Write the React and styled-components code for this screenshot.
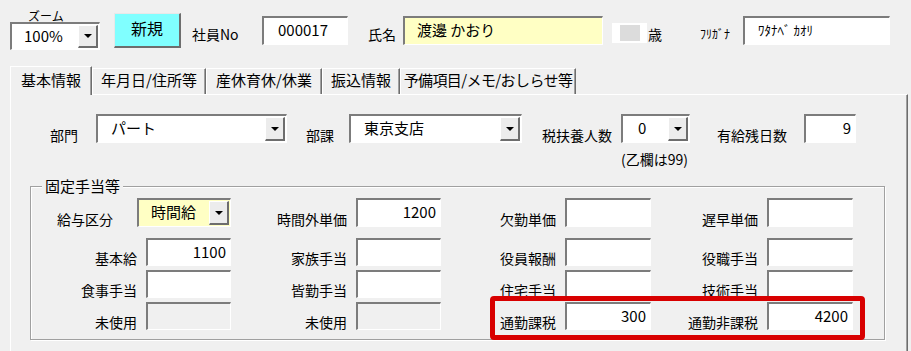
import React from "react";
import styled, { createGlobalStyle } from "styled-components";

const GlobalStyle = createGlobalStyle`
  body {
    margin: 0;
    background: #f0f0f0;
    font-family: "Noto Sans CJK JP", "Noto Sans", sans-serif;
    color: #000;
  }
`;

const Page = styled.div`
  width: 911px;
  height: 351px;
  overflow: hidden;
  background: #f0f0f0;
`;

const TopBar = styled.div`
  display: flex;
  align-items: center;
  height: 40px;
  padding: 10px 0 0 10px;
`;

const ZoomBlock = styled.div`
  display: flex;
  flex-direction: column;
  width: 90px;
`;

const ZoomLabel = styled.div`
  font-size: 12px;
  line-height: 12px;
  padding-left: 18px;
`;

const TopLabel = styled.div`
  box-sizing: border-box;
  width: ${(p) => p.$w}px;
  margin-left: ${(p) => p.$ml || 0}px;
  padding-top: 8px;
  font-size: ${(p) => p.$fs || 14}px;
  line-height: 16px;
  white-space: nowrap;
`;

const NewButton = styled.button`
  box-sizing: border-box;
  width: 67px;
  height: 35px;
  margin-left: 14px;
  background: #80ffff;
  border-style: solid;
  border-width: 1px 2px 2px 1px;
  border-color: #e8e8e8 #6d6d6d #6d6d6d #e8e8e8;
  font-family: inherit;
  font-size: 16px;
  padding: 0 0 3px;
  color: #000;
`;

const TextBox = styled.div`
  box-sizing: border-box;
  width: ${(p) => (p.$w ? `${p.$w}px` : "100%")};
  height: ${(p) => p.$h || 28}px;
  border-style: solid;
  border-width: 2px 1px 1px 2px;
  border-color: #7c7c7c #fff #fff #7c7c7c;
  background: ${(p) => (p.$off ? "#f0f0f0" : p.$bg || "#fff")};
  font-size: ${(p) => p.$fs || 15}px;
  line-height: 20px;
  padding: 2px ${(p) => (p.$right ? 4 : 0)}px 0 ${(p) => (p.$right ? 0 : p.$pl ?? 12)}px;
  text-align: ${(p) => (p.$right ? "right" : "left")};
  white-space: nowrap;
  margin-left: ${(p) => p.$ml || 0}px;
`;

const AgeBox = styled.div`
  box-sizing: border-box;
  width: 35px;
  height: 20px;
  margin: 6px 1px 0 9px;
  background: #dcdcdc;
  border-style: solid;
  border-color: #fff;
  border-width: 2px 7px 2px 8px;
`;

const Combo = styled.div`
  box-sizing: border-box;
  display: flex;
  width: ${(p) => p.$w}px;
  height: ${(p) => p.$h || 29}px;
  border-style: solid;
  border-width: 2px 1px 1px 2px;
  border-color: #7c7c7c #fff #fff #7c7c7c;
  background: ${(p) => p.$bg || "#fff"};
  font-size: 15px;
  line-height: 20px;
`;

const ComboText = styled.div`
  flex: 1;
  padding: 2px 0 0 ${(p) => p.$pl || 12}px;
  white-space: nowrap;
`;

const DropButton = styled.div`
  box-sizing: border-box;
  width: 20px;
  margin: 1px 1px 1px 0;
  background: #ececec;
  border-style: solid;
  border-width: 1px 2px 2px 1px;
  border-color: #fff #6d6d6d #6d6d6d #fff;
  display: flex;
  align-items: center;
  justify-content: center;

  &::after {
    content: "";
    border-left: 4px solid transparent;
    border-right: 4px solid transparent;
    border-top: 4px solid #000;
  }
`;

const TabBar = styled.div`
  display: flex;
  align-items: flex-end;
  height: 28px;
  margin-top: 16px;
  padding-left: 10px;
`;

const Tab = styled.div`
  box-sizing: border-box;
  position: relative;
  z-index: ${(p) => (p.$active ? 2 : 1)};
  width: ${(p) => p.$w}px;
  height: ${(p) => (p.$active ? 29 : 26)}px;
  margin-bottom: ${(p) => (p.$active ? -1 : 0)}px;
  padding-top: ${(p) => (p.$active ? 3 : 1)}px;
  background: #f0f0f0;
  border-style: solid;
  border-width: 1px 1px 0 1px;
  border-color: #fff #6d6d6d #fff #fff;
  box-shadow: inset -1px 0 #a0a0a0;
  font-size: 15px;
  line-height: 20px;
  text-align: center;
  white-space: nowrap;
  letter-spacing: ${(p) => p.$ls || 0}px;
`;

const Panel = styled.div`
  box-sizing: border-box;
  width: 898px;
  height: 270px;
  margin-left: 10px;
  border-top: 1px solid #fff;
  border-left: 1px solid #fff;
  border-right: 1px solid #6d6d6d;
  box-shadow: inset -1px 0 #a0a0a0;
  padding-top: 19px;
`;

const HeadRow = styled.div`
  display: flex;
  align-items: flex-start;
  padding-left: 39px;
`;

const HeadLabel = styled.div`
  box-sizing: border-box;
  width: ${(p) => p.$w}px;
  margin-left: ${(p) => p.$ml || 0}px;
  height: 29px;
  display: flex;
  align-items: flex-end;
  font-size: 14px;
  line-height: 16px;
  white-space: nowrap;
`;

const Stack = styled.div`
  display: flex;
  flex-direction: column;
`;

const Note = styled.div`
  margin-top: 7px;
  font-size: 14px;
  line-height: 18px;
  white-space: nowrap;
`;

const Group = styled.fieldset`
  box-sizing: border-box;
  width: 855px;
  margin: 8px 0 0 19px;
  padding: 2px 9px 9px 9px;
  border: 1px solid #a0a0a0;
  box-shadow: inset 1px 1px 0 #fff, 1px 1px 0 #fff;
  min-inline-size: auto;
`;

const Legend = styled.legend`
  margin-left: 2px;
  padding: 0 3px;
  font-size: 15px;
  line-height: 20px;
  background: #f0f0f0;
`;

const Rows = styled.div`
  display: flex;
  flex-direction: column;
  gap: 4px;
`;

const GridRow = styled.div`
  position: relative;
  display: grid;
  grid-template-columns: 106px 85px 125px 85px 124px 86px 116px 86px;
  height: ${(p) => p.$h || 28}px;
  margin-bottom: ${(p) => p.$mb || 0}px;
`;

const CellLabel = styled.div`
  align-self: end;
  text-align: right;
  padding-right: 9px;
  font-size: 14px;
  line-height: 16px;
  white-space: nowrap;
`;

const PayCell = styled.div`
  grid-column: span 2;
  display: flex;
  align-items: flex-end;
  gap: 15px;
  padding-left: 17px;
`;

const Highlight = styled.div`
  position: absolute;
  left: 450px;
  top: -6px;
  width: 375px;
  height: 44px;
  box-sizing: border-box;
  border: 5px solid #d80000;
  border-radius: 4px;
  z-index: 3;
  pointer-events: none;
`;

const rows = [
  [
    ["基本給", "1100"],
    ["家族手当", ""],
    ["役員報酬", ""],
    ["役職手当", ""],
  ],
  [
    ["食事手当", ""],
    ["皆勤手当", ""],
    ["住宅手当", ""],
    ["技術手当", ""],
  ],
  [
    ["未使用", null],
    ["未使用", null],
    ["通勤課税", "300"],
    ["通勤非課税", "4200"],
  ],
];

const tabs = [
  { label: "基本情報", w: 82, active: true },
  { label: "年月日/住所等", w: 114 },
  { label: "産休育休/休業", w: 116 },
  { label: "振込情報", w: 78 },
  { label: "予備項目/メモ/おしらせ等", w: 176, ls: -0.6 },
];

const App = () => {
  return (
    <Page>
      <GlobalStyle />
      <TopBar>
        <ZoomBlock>
          <ZoomLabel>ズーム</ZoomLabel>
          <Combo $w={90} $h={28}>
            <ComboText>100%</ComboText>
            <DropButton />
          </Combo>
        </ZoomBlock>
        <NewButton>新規</NewButton>
        <TopLabel $w={70} $ml={11}>社員No</TopLabel>
        <TextBox $w={86} $h={29} $pl={14}>000017</TextBox>
        <TopLabel $w={35} $ml={20}>氏名</TopLabel>
        <TextBox $w={200} $h={29} $bg="#ffffc4">渡邊 かおり</TextBox>
        <AgeBox />
        <TopLabel $w={52}>歳</TopLabel>
        <TopLabel $w={43} $fs={12}>ﾌﾘｶﾞﾅ</TopLabel>
        <TextBox $w={147} $h={29} $fs={13} $pl={13}>ﾜﾀﾅﾍﾞ ｶｵﾘ</TextBox>
      </TopBar>

      <TabBar>
        {tabs.map((t) => (
          <Tab key={t.label} $w={t.w} $active={t.active} $ls={t.ls}>
            {t.label}
          </Tab>
        ))}
      </TabBar>

      <Panel>
        <HeadRow>
          <HeadLabel $w={46}>部門</HeadLabel>
          <Combo $w={191}>
            <ComboText $pl={13}>パート</ComboText>
            <DropButton />
          </Combo>
          <HeadLabel $w={43} $ml={19}>部課</HeadLabel>
          <Combo $w={173}>
            <ComboText $pl={13}>東京支店</ComboText>
            <DropButton />
          </Combo>
          <HeadLabel $w={79} $ml={20}>税扶養人数</HeadLabel>
          <Stack>
            <Combo $w={69}>
              <ComboText $pl={15}>0</ComboText>
              <DropButton />
            </Combo>
            <Note>(乙欄は99)</Note>
          </Stack>
          <HeadLabel $w={87} $ml={27}>有給残日数</HeadLabel>
          <TextBox $w={52} $h={29} $right>9</TextBox>
        </HeadRow>

        <Group>
          <Legend>固定手当等</Legend>
          <Rows>
            <GridRow $h={29} $mb={7}>
              <PayCell>
                <CellLabel>給与区分</CellLabel>
                <Combo $w={94} $bg="#ffffc4">
                  <ComboText $pl={12}>時間給</ComboText>
                  <DropButton />
                </Combo>
              </PayCell>
              <CellLabel>時間外単価</CellLabel>
              <TextBox $h={29} $right>1200</TextBox>
              <CellLabel>欠勤単価</CellLabel>
              <TextBox $h={29} />
              <CellLabel>遅早単価</CellLabel>
              <TextBox $h={29} />
            </GridRow>
            {rows.map((row, i) => (
              <GridRow key={i}>
                {row.map(([label, value]) => (
                  <React.Fragment key={label + i}>
                    <CellLabel>{label}</CellLabel>
                    <TextBox $right $off={value === null}>
                      {value}
                    </TextBox>
                  </React.Fragment>
                ))}
                {i === rows.length - 1 && <Highlight />}
              </GridRow>
            ))}
          </Rows>
        </Group>
      </Panel>
    </Page>
  );
};

export default App;
